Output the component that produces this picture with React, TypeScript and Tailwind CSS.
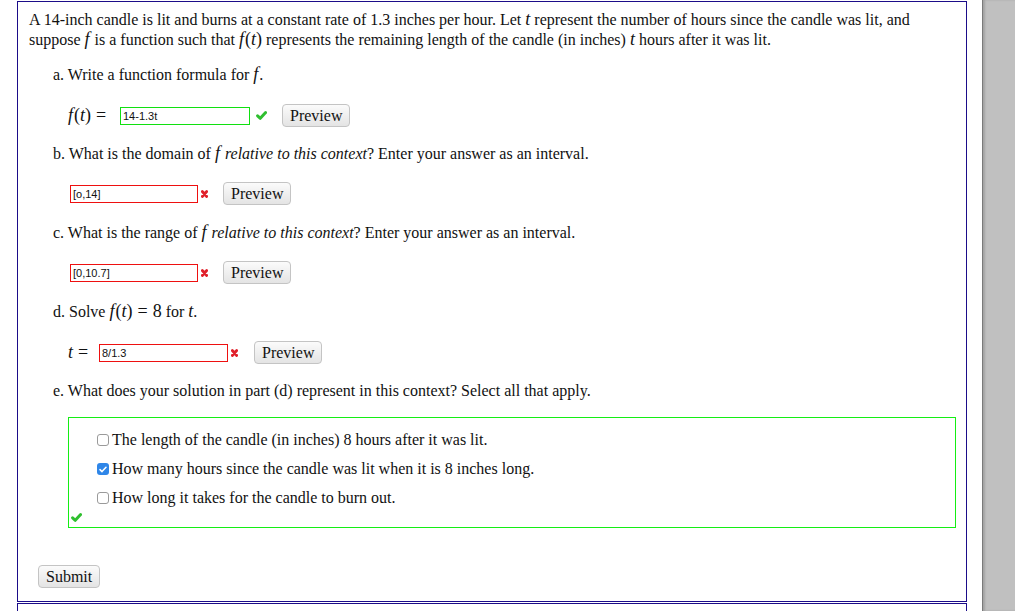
import React from 'react';

const serif = { fontFamily: '"Liberation Serif", "Times New Roman", serif' };

function GreenCheck() {
  return (
    <svg width="11" height="9" viewBox="0 0 11 9" className="shrink-0">
      <path d="M1.6 4.8 L4.3 7.3 L9.6 1.6" fill="none" stroke="#2fbf2f" strokeWidth="3" strokeLinecap="round" strokeLinejoin="round" />
    </svg>
  );
}

function RedCross() {
  return (
    <svg width="7" height="8" viewBox="0 0 7 8" className="shrink-0">
      <path d="M1.3 1.5 L5.7 6.5 M5.7 1.5 L1.3 6.5" stroke="#e0202a" strokeWidth="2.8" strokeLinecap="round" />
    </svg>
  );
}

function PreviewButton({ label = 'Preview' }: { label?: string }) {
  return (
    <button
      className="h-[23px] px-[7px] rounded-[4px] border border-[#c4c4c4] bg-gradient-to-b from-[#fbfbfb] to-[#e4e4e4] text-[16px] leading-[20px] text-[#111]"
      style={serif}
    >
      {label}
    </button>
  );
}

function Answer({ value, ok, width }: { value: string; ok: boolean; width: string }) {
  return (
    <div
      className={`${width} h-[18px] border ${ok ? 'border-[#10e010]' : 'border-[#ee1010]'} bg-white px-[2px] text-[11px] leading-[16px] text-[#111]`}
      style={{ fontFamily: '"Liberation Sans", Arial, sans-serif' }}
    >
      {value}
    </div>
  );
}

function Box({ checked }: { checked: boolean }) {
  if (checked) {
    return (
      <span className="w-[12px] h-[12px] rounded-[3px] bg-[#2f86e8] flex items-center justify-center shrink-0">
        <svg width="8" height="7" viewBox="0 0 8 7">
          <path d="M1 3.6 L3 5.6 L7 1.2" fill="none" stroke="white" strokeWidth="1.5" strokeLinecap="round" strokeLinejoin="round" />
        </svg>
      </span>
    );
  }
  return <span className="w-[12px] h-[12px] rounded-[3px] border border-[#9a9a9a] bg-white shrink-0" />;
}

const I = ({ children }: { children: React.ReactNode }) => <i className="italic">{children}</i>;

// math bits, rendered a little larger like MathJax (tight leading so lines keep 20px)
const F = () => <i className="italic pr-[1px]">f</i>;
const Eq = () => <span className="mx-[5px] not-italic">=</span>;
const M = ({ children }: { children: React.ReactNode }) => <span className="text-[18px] leading-[12px]">{children}</span>;

export default function App() {
  const options = [
    { text: 'The length of the candle (in inches) 8 hours after it was lit.', checked: false },
    { text: 'How many hours since the candle was lit when it is 8 inches long.', checked: true },
    { text: 'How long it takes for the candle to burn out.', checked: false },
  ];

  return (
    <div className="w-[1015px] h-[611px] overflow-hidden flex bg-white text-[#111] text-[16px] leading-[20px]" style={serif}>
      <div className="w-[982px] shrink-0 flex flex-col">
        {/* problem box */}
        <div className="ml-[17px] mt-[1px] w-[950px] h-[601px] border border-[#1b0c89] pl-[11px] pt-[8px] flex flex-col shrink-0">
          <p className="h-[40px]">
            A 14-inch candle is lit and burns at a constant rate of 1.3 inches per hour. Let <M><I>t</I></M> represent the number of hours since the candle was lit, and
            <br />
            suppose <M><F /></M> is a function such that <M><F />(<I>t</I>)</M> represents the remaining length of the candle (in inches) <M><I>t</I></M> hours after it was lit.
          </p>

          <p className="ml-[24px] mt-[15px] h-[20px]">a. Write a function formula for <M><F /></M>.</p>
          <div className="ml-[39px] mt-[19px] h-[23px] flex items-center">
            <span className="w-[52px]"><M><F />(<I>t</I>)<Eq /></M></span>
            <Answer value="14-1.3t" ok width="w-[130px]" />
            <span className="ml-[6px] w-[26px] flex"><GreenCheck /></span>
            <PreviewButton />
          </div>

          <p className="ml-[24px] mt-[17px] h-[20px]">
            b. What is the domain of <M><F /></M> <I>relative to this context</I>? Enter your answer as an interval.
          </p>
          <div className="ml-[41px] mt-[18px] h-[23px] flex items-center">
            <Answer value="[o,14]" ok={false} width="w-[128px]" />
            <span className="ml-[3px] w-[22px] flex"><RedCross /></span>
            <PreviewButton />
          </div>

          <p className="ml-[24px] mt-[18px] h-[20px]">
            c. What is the range of <M><F /></M> <I>relative to this context</I>? Enter your answer as an interval.
          </p>
          <div className="ml-[41px] mt-[18px] h-[23px] flex items-center">
            <Answer value="[0,10.7]" ok={false} width="w-[128px]" />
            <span className="ml-[3px] w-[22px] flex"><RedCross /></span>
            <PreviewButton />
          </div>

          <p className="ml-[24px] mt-[18px] h-[20px]">
            d. Solve <M><F />(<I>t</I>)<Eq />8</M> for <M><I>t</I></M>.
          </p>
          <div className="ml-[39px] mt-[19px] h-[23px] flex items-center">
            <span className="w-[31px]"><M><I>t</I><Eq /></M></span>
            <Answer value="8/1.3" ok={false} width="w-[129px]" />
            <span className="ml-[3px] w-[23px] flex"><RedCross /></span>
            <PreviewButton />
          </div>

          <p className="ml-[24px] mt-[17px] h-[20px]">
            e. What does your solution in part (d) represent in this context? Select all that apply.
          </p>
          <div className="ml-[39px] mt-[16px] w-[888px] h-[111px] border border-[#14ee14] pt-[12px] flex flex-col">
            {options.map((o, i) => (
              <label key={i} className={`ml-[28px] h-[20px] flex items-center gap-[3px] ${i > 0 ? 'mt-[9px]' : ''}`}>
                <Box checked={o.checked} />
                <span>{o.text}</span>
              </label>
            ))}
            <div className="ml-[2px] mt-[5px] flex"><GreenCheck /></div>
          </div>

          <div className="ml-[9px] mt-[37px] flex">
            <PreviewButton label="Submit" />
          </div>
        </div>

        {/* next box */}
        <div className="ml-[17px] mt-[1px] w-[950px] flex-1 border-x border-t border-[#1b0c89]" />
      </div>

      {/* right gutter */}
      <div className="flex-1 bg-[#c0c0c0] border-l border-[#7a7a7a] shadow-[inset_2px_0_2px_rgba(0,0,0,0.15)]" />
    </div>
  );
}
